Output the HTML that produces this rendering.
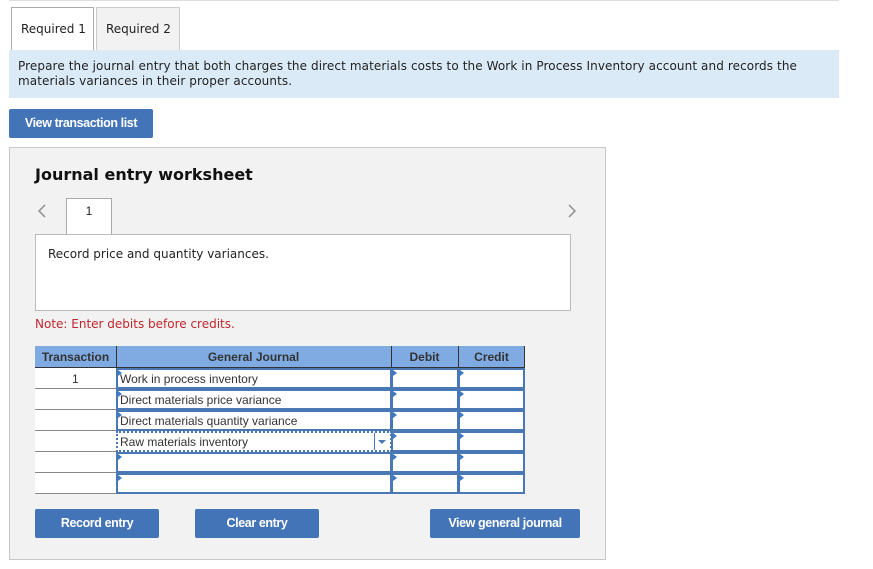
<!DOCTYPE html>
<html><head><style>
*{box-sizing:border-box;margin:0;padding:0}
body{width:873px;height:569px;background:#fff;font-family:"DejaVu Sans","Liberation Sans",sans-serif;position:relative;overflow:hidden;color:#222}
.a{position:absolute}
.btn{position:absolute;background:#4274b7;color:#fff;font-family:"Liberation Sans",sans-serif;font-weight:bold;font-size:12.5px;letter-spacing:-0.4px;text-align:center;border-radius:2px}
.cell{position:absolute;background:#fff;border:2px solid #4a78b5;height:21px}
.mark{position:absolute;left:0;top:0;width:0;height:0;border-top:3px solid transparent;border-bottom:3px solid transparent;border-left:4px solid #3a78c8}
.t{font-family:"Liberation Sans",sans-serif;font-size:12px;color:#333;position:absolute;left:2px;top:2px;white-space:nowrap}
.tr{position:absolute;left:35px;width:81px;height:21px;border-bottom:1px solid #888;background:#fff}
.h{position:absolute;font-family:'Liberation Sans';font-size:12px;font-weight:bold;color:#333;top:350px;text-align:center}
</style></head><body>
<div class="a" style="left:9px;top:0;width:830px;height:1px;background:#ddd"></div>
<div class="a" style="left:11px;top:7px;width:83px;height:44px;border:1px solid #aaa;border-bottom:none;background:#fff;font-size:12px;padding:14px 0 0 9px">Required 1</div>
<div class="a" style="left:96px;top:7px;width:84px;height:43px;border:1px solid #ccc;border-bottom:none;background:#f2f2f2;font-size:12px;padding:14px 0 0 9px">Required 2</div>
<div class="a" style="left:9px;top:50px;width:830px;height:48px;background:#dbeaf7;font-size:12px;line-height:15px;padding:9px 0 0 9px;color:#222;letter-spacing:0.1px">Prepare the journal entry that both charges the direct materials costs to the Work in Process Inventory account and records the<br>materials variances in their proper accounts.</div>
<div class="btn" style="left:9px;top:109px;width:144px;height:29px;line-height:29px">View transaction list</div>

<div class="a" style="left:9px;top:147px;width:597px;height:413px;background:#f2f2f2;border:1px solid #c8c8c8"></div>
<div class="a" style="left:35px;top:165px;font-size:16px;font-weight:bold;color:#111">Journal entry worksheet</div>
<svg class="a" style="left:36px;top:203px" width="12" height="16"><path d="M9 2 L3 8 L9 14" fill="none" stroke="#999" stroke-width="1.6"/></svg>
<svg class="a" style="left:566px;top:203px" width="12" height="16"><path d="M3 2 L9 8 L3 14" fill="none" stroke="#999" stroke-width="1.6"/></svg>
<div class="a" style="left:66px;top:198px;width:46px;height:38px;background:#fff;border:1px solid #aaa;border-bottom:none;font-size:12px;text-align:center;padding-top:5px;font-family:'Liberation Sans'">1</div>
<div class="a" style="left:35px;top:234px;width:536px;height:77px;background:#fff;border:1px solid #bbb;font-size:12px;padding:12px 0 0 12px">Record price and quantity variances.</div>
<div class="a" style="left:35px;top:317px;font-size:12px;color:#c0262d">Note: Enter debits before credits.</div>

<div class="a" style="left:35px;top:346px;width:490px;height:22px;background:#7fabe2;border-bottom:1px solid #333"></div>
<div class="a" style="left:116px;top:346px;width:1px;height:22px;background:#333"></div>
<div class="a" style="left:391px;top:346px;width:1px;height:22px;background:#333"></div>
<div class="a" style="left:458px;top:346px;width:1px;height:22px;background:#333"></div>
<div class="a" style="left:524px;top:346px;width:1px;height:22px;background:#333"></div>
<div class="h" style="left:35px;width:81px">Transaction</div>
<div class="h" style="left:116px;width:275px">General Journal</div>
<div class="h" style="left:391px;width:67px">Debit</div>
<div class="h" style="left:458px;width:67px">Credit</div>

<div class="tr" style="top:368px"><div class="t" style="left:37px;top:4px">1</div></div>
<div class="tr" style="top:389px"></div>
<div class="tr" style="top:410px"></div>
<div class="tr" style="top:431px"></div>
<div class="tr" style="top:452px"></div>
<div class="tr" style="top:473px"></div>

<div class="cell" style="left:116px;top:368px;width:276px"><div class="mark"></div><div class="t">Work in process inventory</div></div>
<div class="cell" style="left:116px;top:389px;width:276px"><div class="mark"></div><div class="t">Direct materials price variance</div></div>
<div class="cell" style="left:116px;top:410px;width:276px"><div class="mark"></div><div class="t">Direct materials quantity variance</div></div>
<div class="a" style="left:116px;top:431px;width:276px;height:21px;background:#fff;border:2px dotted #4a78b5"><div class="t">Raw materials inventory</div><div class="a" style="left:256px;top:0;width:1px;height:17px;background:#4a78b5"></div><div class="a" style="left:260px;top:7px;border-left:4px solid transparent;border-right:4px solid transparent;border-top:4px solid #4a78b5"></div></div>
<div class="cell" style="left:116px;top:452px;width:276px"><div class="mark"></div></div>
<div class="cell" style="left:116px;top:473px;width:276px"><div class="mark"></div></div>

<div class="cell" style="left:391px;top:368px;width:68px"><div class="mark"></div></div>
<div class="cell" style="left:391px;top:389px;width:68px"><div class="mark"></div></div>
<div class="cell" style="left:391px;top:410px;width:68px"><div class="mark"></div></div>
<div class="cell" style="left:391px;top:431px;width:68px"><div class="mark"></div></div>
<div class="cell" style="left:391px;top:452px;width:68px"><div class="mark"></div></div>
<div class="cell" style="left:391px;top:473px;width:68px"><div class="mark"></div></div>
<div class="cell" style="left:458px;top:368px;width:67px"><div class="mark"></div></div>
<div class="cell" style="left:458px;top:389px;width:67px"><div class="mark"></div></div>
<div class="cell" style="left:458px;top:410px;width:67px"><div class="mark"></div></div>
<div class="cell" style="left:458px;top:431px;width:67px"><div class="mark"></div></div>
<div class="cell" style="left:458px;top:452px;width:67px"><div class="mark"></div></div>
<div class="cell" style="left:458px;top:473px;width:67px"><div class="mark"></div></div>

<div class="btn" style="left:35px;top:509px;width:124px;height:29px;line-height:29px">Record entry</div>
<div class="btn" style="left:195px;top:509px;width:124px;height:29px;line-height:29px">Clear entry</div>
<div class="btn" style="left:430px;top:509px;width:150px;height:29px;line-height:29px">View general journal</div>
</body></html>
